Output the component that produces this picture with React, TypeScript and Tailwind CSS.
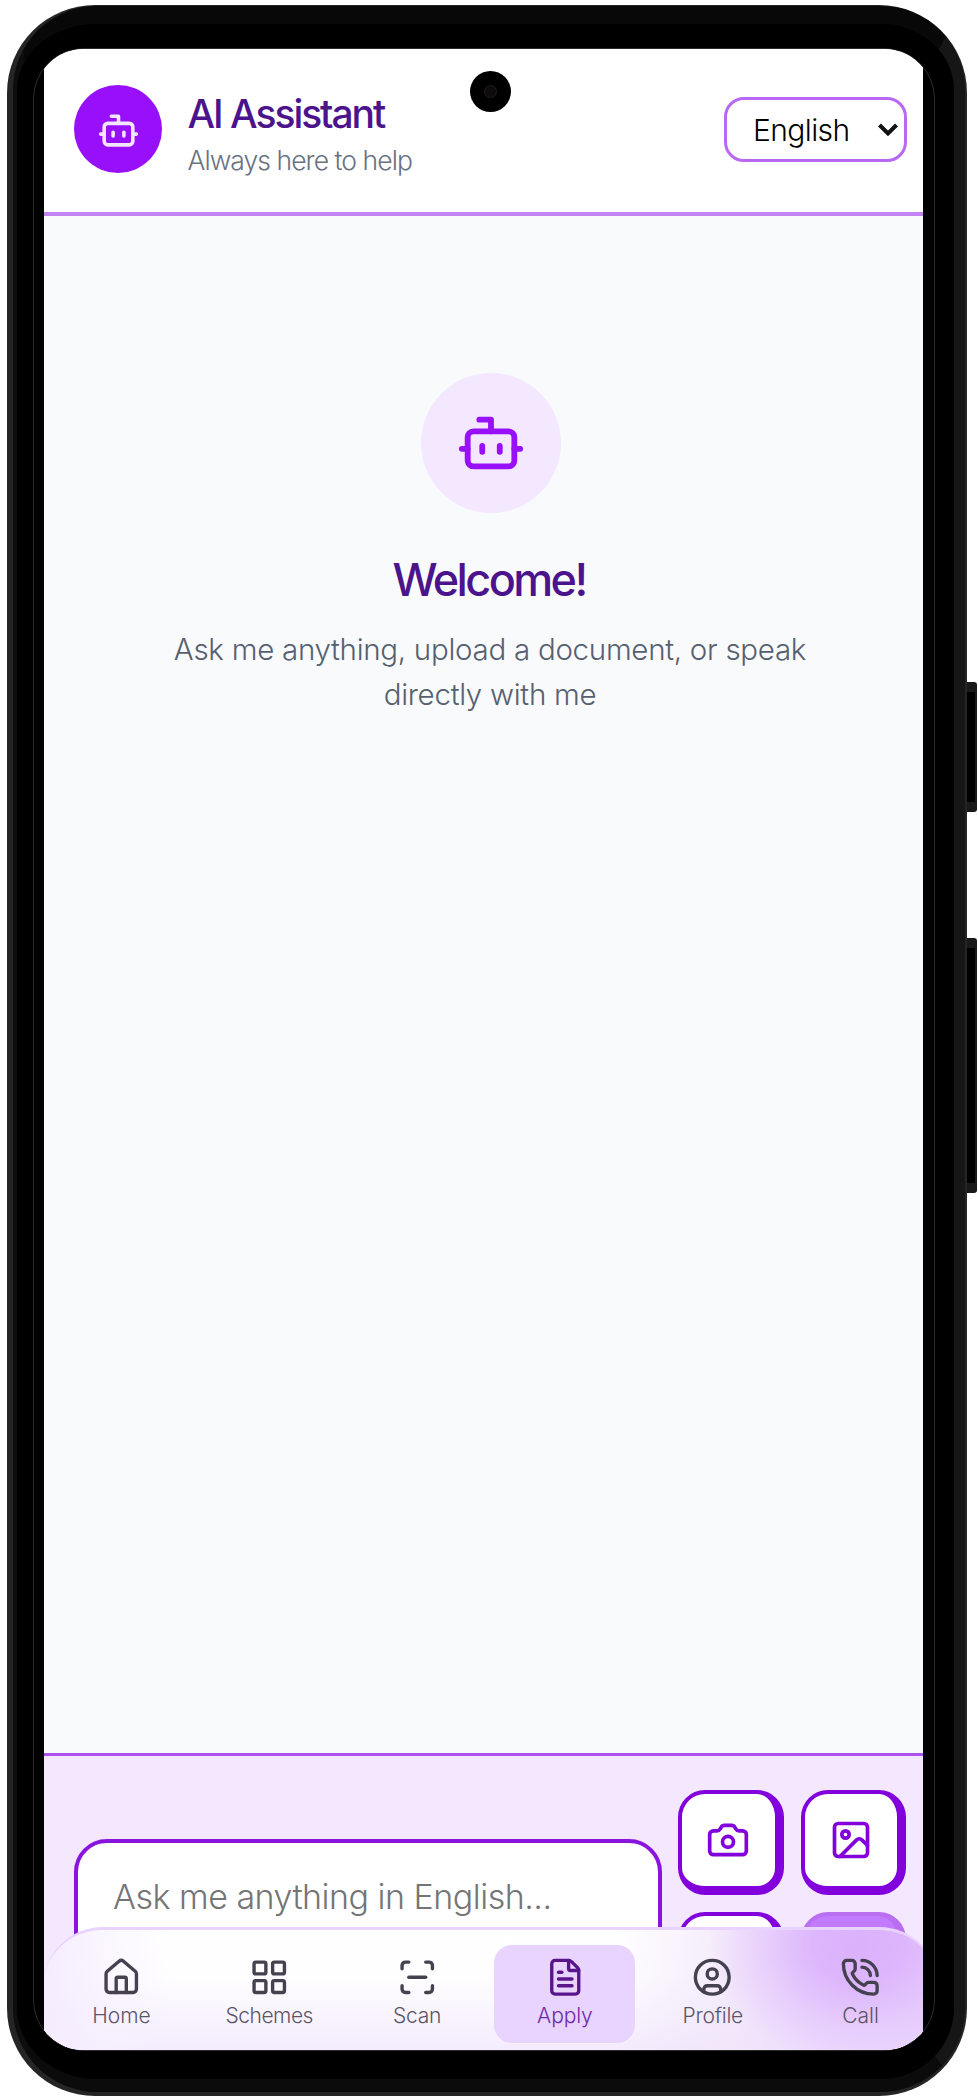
import type { ReactNode } from "react";
import {
  Bot,
  Camera,
  CircleUser,
  FileText,
  House,
  Image as ImageIcon,
  LayoutGrid,
  PhoneCall,
  ScanLine,
  type LucideIcon,
} from "lucide-react";

type NavItem = { label: string; icon: LucideIcon; tracking: string; active?: boolean };

const navItems: NavItem[] = [
  { label: "Home", icon: House, tracking: "tracking-[-0.1px]" },
  { label: "Schemes", icon: LayoutGrid, tracking: "tracking-[-0.5px]" },
  { label: "Scan", icon: ScanLine, tracking: "tracking-[-0.3px]" },
  { label: "Apply", icon: FileText, tracking: "tracking-[-0.1px]", active: true },
  { label: "Profile", icon: CircleUser, tracking: "tracking-[-0.2px]" },
  { label: "Call", icon: PhoneCall, tracking: "tracking-[0px]" },
];

function Header() {
  return (
    <header className="flex h-[167px] shrink-0 items-start border-b-[4px] border-[#c384f3] bg-white pl-[30px] pr-4 pt-[36px]">
      <div className="flex size-[88px] shrink-0 items-center justify-center rounded-full bg-[#980ffa]">
        <Bot className="mt-[2px] size-[43px] text-[#f3e6ff]" strokeWidth={2} />
      </div>
      <div className="ml-[25.5px] flex flex-col whitespace-nowrap pt-[7px]">
        <h1 className="text-[39px] font-medium leading-[44px] tracking-[-2.05px] text-[#4c148c]">AI Assistant</h1>
        <p className="mt-[6px] text-[26.5px] font-light leading-[36px] tracking-[-0.95px] text-[#6a7282]">
          Always here to help
        </p>
      </div>
      <button className="ml-auto mt-[11.5px] flex h-[65.5px] w-[183px] items-center justify-between rounded-[20px] border-[3px] border-[#b968f3] bg-white pl-[26px] pr-[6px]">
        <span className="mt-[1px] text-[30px] font-light leading-none tracking-[-0.6px] text-black">English</span>
        <svg viewBox="0 0 20 14" className="mt-[1px] h-[14px] w-[20px]" fill="none" stroke="#111" strokeWidth="4">
          <path d="M1.5 2 10 10.5 18.5 2" />
        </svg>
      </button>
    </header>
  );
}

function Welcome() {
  return (
    <main className="flex h-[1537px] shrink-0 flex-col items-center bg-[#f9fafc] pt-[156.5px] text-center">
      <div className="ml-[14px] flex size-[140px] items-center justify-center rounded-full bg-[#f3e8ff]">
        <Bot className="size-[70px] text-[#9810fa]" strokeWidth={2} />
      </div>
      <h2 className="ml-[11px] mt-[40.5px] text-[45px] font-medium leading-[54px] tracking-[-2.6px] text-[#4c148c]">
        Welcome!
      </h2>
      <p className="ml-[13px] mt-[20px] text-[29.5px] font-light leading-[45px] tracking-[-0.28px] text-[#566070]">
        Ask me anything, upload a document, or speak
        <br />
        directly with me
      </p>
    </main>
  );
}

function ActionButton({ children }: { children?: ReactNode }) {
  return (
    <button className="flex size-[105.5px] items-center justify-center rounded-[27px] border-b-[9px] border-l-[4px] border-r-[9px] border-t-[4px] border-[#8200db] bg-white text-[#8200db]">
      {children}
    </button>
  );
}

function Composer() {
  return (
    <section className="flex h-[297px] shrink-0 items-start border-t-[3px] border-[#ae52ed] bg-[#f3e8ff] pl-[30px]">
      <div className="mt-[83px] h-[150px] w-[587.5px] shrink-0 rounded-[33px] border-[4px] border-[#8a14de] bg-white pl-[35px] pt-[32px]">
        <span className="whitespace-nowrap text-[34px] font-light leading-[44px] tracking-[-0.5px] text-[#757575]">
          Ask me anything in English...
        </span>
      </div>
      <div className="ml-[16.5px] mt-[33.5px] grid grid-cols-[105.5px_105.5px] gap-[17px]">
        <ActionButton>
          <Camera className="size-[44px]" strokeWidth={2} />
        </ActionButton>
        <ActionButton>
          <ImageIcon className="size-[44px]" strokeWidth={2} />
        </ActionButton>
        <ActionButton />
        <button className="size-[105.5px] rounded-[27px] border-b-[9px] border-l-[4px] border-r-[9px] border-t-[4px] border-[#ba6ef0] bg-[#c27aff]" />
      </div>
    </section>
  );
}

function BottomNav() {
  return (
    <nav className="absolute -left-px bottom-0 grid h-[123px] w-[896px] grid-cols-6 gap-[7px] rounded-t-[60px] border-t-[3px] border-[#e9d4ff] bg-[radial-gradient(ellipse_150px_120px_at_815px_16px,#dbb0fc_0%,#dbb2fce6_30%,#dfbcfc80_65%,#e8d0fc00_100%),linear-gradient(90deg,#f5ecfe_0px,#f7f0fe99_60px,#ffffff00_130px,#ffffff00_570px,#efe2f9b3_690px,#ecd9fde6_790px,#e9d4fd_896px),linear-gradient(180deg,#ffffff_0%,#fefdff_40%,#f4ecfd_100%)] px-[8px] pt-[15px]">
      {navItems.map(({ label, icon: Icon, tracking, active }) => (
        <a
          key={label}
          className={
            active
              ? "flex h-[98px] flex-col items-center rounded-[18px] bg-[#e9d4ff] pt-[11.5px] text-[#59168b]"
              : "flex h-[98px] flex-col items-center rounded-[18px] pt-[11.5px] text-[#45414e]"
          }
        >
          <Icon className="size-[40.5px]" strokeWidth={2} />
          <span
            className={`mt-[4.5px] text-[21px] font-light leading-[28px] ${tracking} ${active ? "text-[#6a2ba8]" : "text-[#5b5566]"}`}
          >
            {label}
          </span>
        </a>
      ))}
    </nav>
  );
}

export default function App() {
  return (
    <div className="relative h-[2100px] w-[978px] overflow-hidden bg-white pl-[7px] pt-[5px] font-['Inter',sans-serif]">
      <div className="absolute left-[962px] top-[682px] h-[130px] w-[15px] rounded-r-[3px] border-y-[10px] border-r-2 border-[#191919] bg-black" />
      <div className="absolute left-[962px] top-[938px] h-[255px] w-[15px] rounded-r-[3px] border-y-[10px] border-r-2 border-[#191919] bg-black" />
      <div className="relative h-[2091px] w-[960px] rounded-[88px] bg-[#252525] pb-[4px] pl-[6px] pr-[2px] pt-px">
        <div className="h-full rounded-[84px] border-b-[13px] border-l-[4px] border-r-[11px] border-t-[18px] border-b-[#0b0b0b] border-l-[#0d0d0d] border-r-[#161616] border-t-[#080808] bg-black pl-[16px] pt-[24px]">
          <div className="h-[2003px] w-[902px] rounded-[51px] border border-[#2c2c2c] bg-black">
            <div className="h-[2001px] w-[900px] overflow-hidden rounded-[50px]">
              <div className="relative ml-[10px] flex h-full w-[879px] flex-col overflow-hidden bg-white">
                <Header />
                <Welcome />
                <Composer />
                <BottomNav />
                <div className="absolute left-[426px] top-[22px] flex size-[41px] items-center justify-center rounded-full bg-black">
                  <div className="size-[13px] rounded-full border border-[#231d1c] bg-[#0d0b0d]" />
                </div>
              </div>
            </div>
          </div>
        </div>
      </div>
    </div>
  );
}
